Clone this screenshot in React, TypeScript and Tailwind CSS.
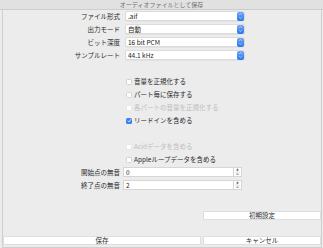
import { ChevronUp, ChevronDown } from 'lucide-react';

const font = { fontFamily: '"Noto Sans CJK JP", "Noto Sans", sans-serif' };

function SelectRow({ label, value }: { label: string; value: string }) {
    return (
        <div className="flex items-center h-[10px]">
            <div className="w-[120px] text-right text-[6.5px] leading-none text-[#2a2a2a]">{label}</div>
            <div className="ml-[5px] w-[120px] h-[10px] bg-white border border-[#dcdcdc] rounded-[2px] flex items-center justify-between shadow-[0_0.5px_0.5px_rgba(0,0,0,0.08)]">
                <span className="pl-[2px] text-[6.5px] leading-none text-[#222]">{value}</span>
                <div className="w-[7px] h-[9px] rounded-[2px] bg-gradient-to-b from-[#6aa6f8] to-[#2f75e8] flex flex-col items-center justify-center">
                    <ChevronUp className="w-[5px] h-[4px] text-white" strokeWidth={3} />
                    <ChevronDown className="w-[5px] h-[4px] text-white" strokeWidth={3} />
                </div>
            </div>
        </div>
    );
}

function Check({ label, checked, disabled }: { label: string; checked?: boolean; disabled?: boolean }) {
    return (
        <div className="flex items-center h-[13px] pl-[126px]">
            {checked ? (
                <div className="w-[6px] h-[6px] rounded-[1.5px] bg-[#3b82f0] flex items-center justify-center">
                    <svg viewBox="0 0 6 6" className="w-[5px] h-[5px]">
                        <path d="M1 3.2 L2.4 4.6 L5 1.4" fill="none" stroke="white" strokeWidth="1" />
                    </svg>
                </div>
            ) : (
                <div className={`w-[6px] h-[6px] rounded-[1.5px] bg-white border ${disabled ? 'border-[#e6e6e6]' : 'border-[#d2d2d2]'}`} />
            )}
            <span className={`ml-[2px] text-[6.5px] leading-none ${disabled ? 'text-[#bdbdbd]' : 'text-[#2a2a2a]'}`}>{label}</span>
        </div>
    );
}

function NumberRow({ label, value }: { label: string; value: string }) {
    return (
        <div className="flex items-center h-[10px]">
            <div className="w-[120px] text-right text-[6.5px] leading-none text-[#2a2a2a]">{label}</div>
            <div className="ml-[3px] w-[111px] h-[10px] bg-white border border-[#d6d6d6] flex items-center">
                <span className="pl-[2px] text-[6.5px] leading-none text-[#222]">{value}</span>
            </div>
            <div className="w-[8px] h-[10px] bg-white border border-l-0 border-[#d6d6d6]">
                <svg viewBox="0 0 7 8" className="w-[7px] h-[8px]">
                    <path d="M3.5 0.6 V3.2 M2.2 1.9 H4.8" stroke="#555" strokeWidth="0.7" fill="none" />
                    <path d="M0.8 4.2 H6.2" stroke="#cfcfcf" strokeWidth="0.6" />
                    <path d="M2.2 6.2 H4.8" stroke="#555" strokeWidth="0.7" />
                </svg>
            </div>
        </div>
    );
}

export default function App() {
    return (
        <div className="w-[323px] h-[248px] bg-[#ececec] flex flex-col" style={font}>
            <div className="h-[10px] bg-[#e1e1e1] border-b border-[#cdcdcd] flex items-center justify-center">
                <span className="text-[6px] leading-none text-[#6e6e6e]">オーディオファイルとして保存</span>
            </div>
            <div className="ml-[2px] w-[320px] h-[238px] border-l border-r border-b border-[#cfcfcf] flex flex-col">
                <div className="pt-[1px] flex flex-col gap-[3px] -ml-[3px]">
                    <SelectRow label="ファイル形式" value=".aif" />
                    <SelectRow label="出力モード" value="自動" />
                    <SelectRow label="ビット深度" value="16 bit PCM" />
                    <SelectRow label="サンプルレート" value="44.1 kHz" />
                </div>
                <div className="mt-[15px] flex flex-col -ml-[3px]">
                    <Check label="音量を正規化する" />
                    <Check label="パート毎に保存する" />
                    <Check label="各パートの音量を正規化する" disabled />
                    <Check label="リードインを含める" checked />
                    <div className="h-[13px]" />
                    <Check label="Acidデータを含める" disabled />
                    <Check label="Appleループデータを含める" />
                </div>
                <div className="mt-[1px] flex flex-col gap-[3px] -ml-[3px]">
                    <NumberRow label="開始点の無音" value="0" />
                    <NumberRow label="終了点の無音" value="2" />
                </div>
                <div className="mt-[21px] flex justify-end">
                    <div className="w-[118px] h-[9px] bg-white border border-[#dedede] flex items-center justify-center text-[6.5px] leading-none text-[#2a2a2a]">初期設定</div>
                </div>
                <div className="mt-[16px] flex gap-[2px]">
                    <div className="flex-1 h-[9px] bg-white border border-[#dedede] flex items-center justify-center text-[6.5px] leading-none text-[#2a2a2a]">保存</div>
                    <div className="w-[118px] h-[9px] bg-white border border-[#dedede] flex items-center justify-center text-[6.5px] leading-none text-[#2a2a2a]">キャンセル</div>
                </div>
            </div>
        </div>
    );
}
